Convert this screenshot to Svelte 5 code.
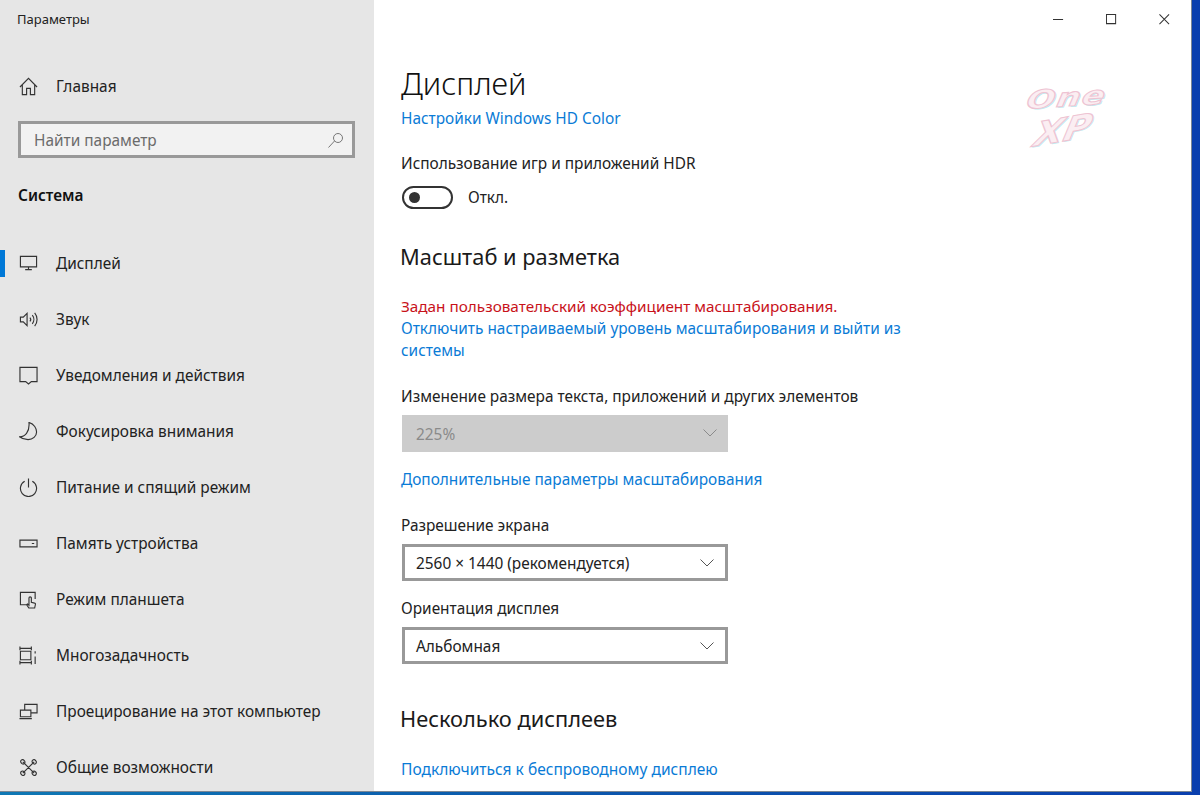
<script>
  const nav = [
    { label: 'Дисплей', active: true, d: 'M1.500 2.500h17v11h-17zM10 13.500v3M6.500 16.500h7' },
    { label: 'Звук', d: 'M1.500 7.500h3l4-4v13l-4-4h-3zM11.500 8a3 3 0 0 1 0 4M14 5.500a7 7 0 0 1 0 9M16.500 3a11 11 0 0 1 0 14' },
    { label: 'Уведомления и действия', d: 'M1 1.500h18v15h-6l-3 2.500-3-2.500h-6z' },
    { label: 'Фокусировка внимания', d: 'M10.500 .5C16 2 18.500 7 18.500 10.500C18.500 15 14.500 18.500 9.500 18.500C6 18.500 3 17.500 .5 15.500C6 15.500 11.500 11 10.500 .5z' },
    { label: 'Питание и спящий режим', d: 'M10 .5v9.500M6 3.500a8.500 8.500 0 1 0 8 0' },
    { label: 'Память устройства', d: 'M1 6.500h18v7h-18zM13.500 10h2.500' },
    { label: 'Режим планшета', d: 'M8.500 15.500h-7v-13h15.500v7M10.500 19l-2.500-3.500 1-.8 1.500 1.300v-7.500a1 1 0 0 1 2.500 0v4.500l3.500.8a1 1 0 0 1 .8 1.200l-.8 4z' },
    { label: 'Многозадачность', d: 'M1.500 5.500h11v9h-11zM1 .5v4M13 .5v4M1 15.500v4M13 15.500v4M1 2.500h12M1 17.500h12M17 5.500v2.500M17 11v8' },
    { label: 'Проецирование на этот компьютер', d: 'M6 8v-5.500h13v9h-6M1.500 8.500h11v7h-11zM.5 17.500h13' },
    { label: 'Общие возможности', d: 'M4 4l12 12M16 4l-12 12M5.500 2.800a2 2 0 1 1-3 2.500a2 2 0 1 1 3-2.500zM17.500 2.800a2 2 0 1 1-3 2.500a2 2 0 1 1 3-2.500zM5.500 14.800a2 2 0 1 1-3 2.500a2 2 0 1 1 3-2.500zM17.500 14.800a2 2 0 1 1-3 2.500a2 2 0 1 1 3-2.500z' }
  ];
</script>

<div class="desktop">
  <div class="window">
    <aside class="sidebar">
      <div class="app-title">Параметры</div>
      <div class="row home">
        <svg class="icon" viewBox="0 0 20 20"><path d="M1 10.500l9-9 9 9M3.500 8.500v10h4.500v-6.500h4v6.500h4.500v-10" /></svg>
        <span>Главная</span>
      </div>
      <div class="search">
        <span>Найти параметр</span>
        <svg viewBox="0 0 16 16"><path d="M6.500 6a4.500 4.500 0 1 0 9 0a4.500 4.500 0 1 0-9 0zM7.500 9l-6 6.500" /></svg>
      </div>
      <div class="group">Система</div>
      <nav>
        {#each nav as item}
          <div class="row" class:active={item.active}>
            <svg class="icon" viewBox="0 0 20 20"><path d={item.d} /></svg>
            <span>{item.label}</span>
          </div>
        {/each}
      </nav>
    </aside>

    <main class="content">
      <div class="controls">
        <svg viewBox="0 0 12 12"><path d="M0 6h11" /></svg>
        <svg viewBox="0 0 12 12"><path d="M.500.500h10v10h-10z" /></svg>
        <svg viewBox="0 0 12 12"><path d="M.500.500l10.500 10.500M11 .500l-10.500 10.500" /></svg>
      </div>

      <div class="watermark"><span class="one">One</span><span class="xp">XP</span></div>

      <h1>Дисплей</h1>
      <a class="link first" href="#hd">Настройки Windows HD Color</a>
      <div class="label hdr">Использование игр и приложений HDR</div>
      <div class="toggle-row">
        <div class="toggle"><i></i></div>
        <span>Откл.</span>
      </div>

      <h2>Масштаб и разметка</h2>
      <p class="warn">Задан пользовательский коэффициент масштабирования.</p>
      <a class="link wrap" href="#off">Отключить настраиваемый уровень масштабирования и выйти из системы</a>

      <div class="label size">Изменение размера текста, приложений и других элементов</div>
      <div class="select disabled">
        <span>225%</span>
        <svg viewBox="0 0 14 8"><path d="M.500.500l6.500 6.500 6.500-6.500" /></svg>
      </div>
      <a class="link extra" href="#more">Дополнительные параметры масштабирования</a>

      <div class="label res">Разрешение экрана</div>
      <div class="select">
        <span>2560 × 1440 (рекомендуется)</span>
        <svg viewBox="0 0 14 8"><path d="M.500.500l6.500 6.500 6.500-6.500" /></svg>
      </div>
      <div class="label orient">Ориентация дисплея</div>
      <div class="select">
        <span>Альбомная</span>
        <svg viewBox="0 0 14 8"><path d="M.500.500l6.500 6.500 6.500-6.500" /></svg>
      </div>

      <h2 class="multi">Несколько дисплеев</h2>
      <a class="link wireless" href="#wireless">Подключиться к беспроводному дисплею</a>
    </main>
  </div>
</div>

<style>
  :global(html), :global(body) {
    margin: 0;
    overflow: hidden;
  }

  .desktop {
    width: 1200px;
    height: 795px;
    background: linear-gradient(90deg, #0f78b4 0%, #0b58ac 45%, #0a3fae 100%);
    font-family: "Noto Sans", "Open Sans", sans-serif;
    color: #222;
    overflow: hidden;
  }

  .window {
    display: flex;
    width: 1191px;
    height: 791px;
    border-right: 1px solid #7c8794;
    border-bottom: 1px solid #7c8794;
    background: #fff;
    overflow: hidden;
  }

  .sidebar {
    flex: 0 0 374px;
    background: #e6e6e6;
    font-size: 15.4px;
  }

  .app-title {
    height: 38px;
    line-height: 38px;
    padding-left: 17px;
    font-size: 13px;
  }

  .row {
    position: relative;
    display: flex;
    align-items: center;
    height: 56px;
    padding-left: 19px;
    gap: 18px;
    white-space: nowrap;
  }

  .row.home {
    margin-top: 20px;
    margin-bottom: 7px;
  }

  .row.active::before {
    content: "";
    position: absolute;
    left: 0;
    top: 15px;
    width: 5px;
    height: 27px;
    background: #0078d7;
  }

  .icon {
    flex: 0 0 19px;
    width: 19px;
    height: 19px;
    fill: none;
    stroke: #333;
    stroke-width: 1.2;
  }

  .search {
    display: flex;
    align-items: center;
    justify-content: space-between;
    box-sizing: border-box;
    width: 337px;
    height: 37px;
    margin: 0 0 0 18px;
    padding: 0 9px 0 13px;
    border: 3px solid #999;
    background: #f2f2f2;
    color: #6b6b6b;
  }

  .search span {
    padding-top: 2px;
  }

  .search svg {
    width: 16px;
    height: 16px;
    fill: none;
    stroke: #777;
    stroke-width: 1;
  }

  .group {
    margin: 26px 0 27px 18px;
    line-height: 24px;
    font-weight: 600;
    color: #111;
  }

  .content {
    position: relative;
    flex: 1;
    padding-left: 27px;
    font-size: 15.4px;
  }

  .controls {
    display: flex;
    justify-content: flex-end;
    align-items: center;
    gap: 42px;
    height: 38px;
    padding-right: 21px;
  }

  .controls svg {
    width: 11px;
    height: 11px;
    fill: none;
    stroke: #333;
    stroke-width: 1.100;
  }

  /* faint logo floating over the page */
  .watermark {
    position: absolute;
    left: 653px;
    top: 86px;
    display: flex;
    flex-direction: column;
    width: 84px;
    font-family: "DejaVu Sans", sans-serif;
    font-style: italic;
    font-weight: 700;
    color: #fbeef2;
    -webkit-text-stroke: 1px #eec3d2;
    text-shadow: 1px 1px 0 #bcebef;
  }

  .watermark .one {
    font-size: 25px;
    line-height: 30px;
    letter-spacing: 1px;
    transform: rotate(-4deg) skewX(-14deg) scaleX(1.35);
    transform-origin: left center;
  }

  .watermark .xp {
    margin: 3px 0 0 8px;
    font-size: 32px;
    line-height: 32px;
    transform: rotate(-10deg) skewX(-22deg) scaleX(1.2);
    transform-origin: left center;
  }

  h1 {
    margin: 23px 0 0;
    font-size: 30.7px;
    line-height: 44px;
    font-weight: 300;
    color: #111;
  }

  h2 {
    margin: 33px 0 0 -1px;
    font-size: 21.8px;
    line-height: 30px;
    font-weight: 400;
    color: #1a1a1a;
  }

  .link {
    display: block;
    line-height: 22.500px;
    color: #0a7bd6;
    text-decoration: none;
  }

  .link.first { margin-top: 3px; }
  .link.wrap { width: 520px; margin-top: 1px; }
  .link.extra { margin-top: 17px; }
  .link.wireless { margin-top: 24px; font-size: 15.55px; }

  .label {
    line-height: 22px;
  }

  .label.hdr { margin-top: 22px; }
  .label.size { margin-top: 23px; }
  .label.res { margin-top: 24px; }
  .label.orient { margin-top: 17px; }

  .warn {
    margin: 23px 0 0;
    line-height: 22px;
    font-size: 15.3px;
    color: #c8121a;
  }

  .toggle-row {
    display: flex;
    align-items: center;
    gap: 15px;
    margin-top: 11px;
  }

  .toggle {
    display: flex;
    align-items: center;
    box-sizing: border-box;
    width: 51px;
    height: 23px;
    margin-left: 1px;
    padding-left: 5px;
    border: 2px solid #333;
    border-radius: 12px;
  }

  .toggle i {
    width: 11px;
    height: 11px;
    border-radius: 50%;
    background: #333;
  }

  .select {
    display: flex;
    align-items: center;
    justify-content: space-between;
    box-sizing: border-box;
    width: 326px;
    height: 37px;
    margin: 7px 0 0 1px;
    padding: 0 11px;
    border: 3px solid #999;
    background: #fff;
  }

  .select span {
    padding-top: 2px;
  }

  .select svg {
    width: 14px;
    height: 8px;
    fill: none;
    stroke: #555;
    stroke-width: 1;
  }

  .select.disabled {
    border: 0;
    padding: 0 11px 0 14px;
    background: #ccc;
    color: #8a8a8a;
  }

  .select.disabled svg {
    stroke: #8a8a8a;
  }

  .multi {
    margin-top: 40px;
  }
</style>
